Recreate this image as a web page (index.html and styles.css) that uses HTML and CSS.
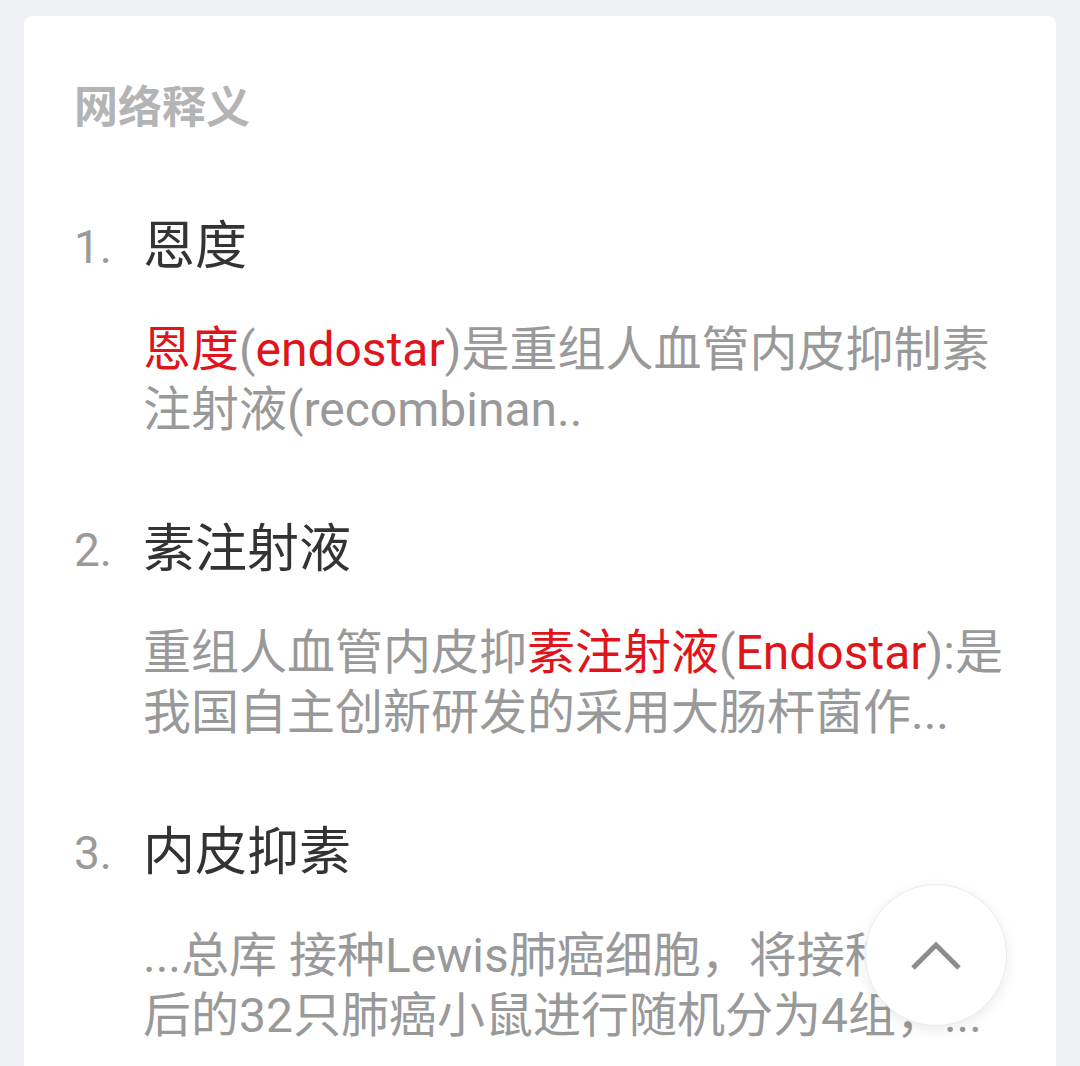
FILE: index.html
```html
<!DOCTYPE html>
<html lang="zh-CN">

<head>
  <meta charset="UTF-8" />
  <meta name="viewport" content="width=device-width, initial-scale=1.0" />
  <title>网络释义</title>
  <link rel="stylesheet" href="styles.css">
</head>

<body>
  <div class="tarjeta">
    <h2 class="titulo">网络释义</h2>

    <div class="item">
      <div class="numero">1.</div>
      <div class="cuerpo">
        <div class="palabra">恩度</div>
        <div class="texto">
          <span class="resaltado">恩度</span>(<span class="resaltado">endostar</span>)是重组人血管内皮抑制素<br />
          注射液(recombinan..
        </div>
      </div>
    </div>

    <div class="item">
      <div class="numero">2.</div>
      <div class="cuerpo">
        <div class="palabra">素注射液</div>
        <div class="texto">
          重组人血管内皮抑<span class="resaltado">素注射液</span>(<span class="resaltado">Endostar</span>):是<br />
          我国自主创新研发的采用大肠杆菌作...
        </div>
      </div>
    </div>

    <div class="item">
      <div class="numero">3.</div>
      <div class="cuerpo">
        <div class="palabra">内皮抑素</div>
        <div class="texto">
          ...总库 接种Lewis肺癌细胞，将接种<br />
          后的32只肺癌小鼠进行随机分为4组，...
        </div>
      </div>
    </div>
  </div>

  <button class="subir" type="button" aria-label="volver arriba">
    <svg width="52" height="32" viewBox="0 0 52 32">
      <polyline points="3,29 26,6 49,29" fill="none" stroke="#8c8c8c" stroke-width="5" />
    </svg>
  </button>
</body>

</html>
```

FILE: styles.css
```css
html,
body {
  margin: 0;
  height: 100%;
  overflow: hidden;
}

body {
  background-color: #eef0f3;
  font-family: "Roboto", "Noto Sans CJK SC", sans-serif;
}

.tarjeta {
  margin: 16px 24px 0;
  padding: 62px 50px 0;
  background-color: #fff;
  border-radius: 8px;
  height: 1100px;
  box-sizing: border-box;
}

.titulo {
  margin: 0 0 73px;
  font-size: 44px;
  line-height: 60px;
  font-weight: bold;
  color: #b4b4b4;
}

.item {
  display: flex;
  margin-bottom: 74px;
}

.numero {
  width: 69px;
  flex-shrink: 0;
  font-size: 46px;
  line-height: 72px;
  color: #9a9a9a;
}

.palabra {
  font-size: 52px;
  line-height: 72px;
  color: #333;
  margin-bottom: 37px;
}

.texto {
  font-size: 48px;
  line-height: 60px;
  color: #999;
  white-space: nowrap;
}

.resaltado {
  color: #e0141b;
}

.subir {
  position: absolute;
  left: 865px;
  top: 884px;
  width: 142px;
  height: 142px;
  border-radius: 50%;
  border: 1px solid #ebebeb;
  background-color: #fff;
  box-shadow: 0 4px 14px rgba(0, 0, 0, 0.08);
  display: flex;
  align-items: center;
  justify-content: center;
  padding: 0;
}
```
